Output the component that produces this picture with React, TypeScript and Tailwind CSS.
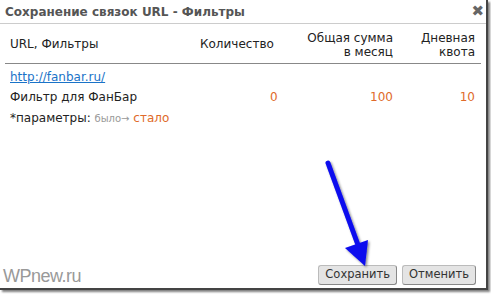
export default function App() {
  return (
    <div className="relative w-[491px] h-[294px] bg-white overflow-hidden" style={{ fontFamily: '"DejaVu Sans", Verdana, sans-serif' }}>
      <div className="w-[488px] h-[290px] bg-white border-r-[2px] border-b-[2px] border-[#444] shadow-[2px_2px_2px_rgba(0,0,0,0.5)] flex flex-col">
        {/* Title */}
        <div className="flex items-center justify-between h-[24px] pl-[5px] pr-[2px] border-b border-[#ccc]">
          <span className="text-[12px] font-bold text-[#555]">Сохранение связок URL - Фильтры</span>
          <span className="text-[15px] font-bold text-[#666] leading-none">✖</span>
        </div>

        {/* Table */}
        <div className="px-[5px] pt-[7px] text-[12px] text-[#222]">
          <div className="grid grid-cols-[188px_88px_112px_82px] items-end pb-[4px] border-b border-[#888]">
            <span className="pl-[5px] pb-[6px]">URL, Фильтры</span>
            <span className="pb-[6px] pl-[7px]">Количество</span>
            <span className="text-right leading-[14px]">Общая сумма<br />в месяц</span>
            <span className="text-right leading-[14px]">Дневная<br />квота</span>
          </div>
          <div className="pl-[5px] pt-[3px] leading-[20px]">
            <a className="text-[#1a73c8] underline">http://fanbar.ru/</a>
          </div>
          <div className="grid grid-cols-[188px_88px_112px_82px] leading-[20px]">
            <span className="pl-[5px]">Фильтр для ФанБар</span>
            <span className="pl-[77px] text-[#e06a2a]">0</span>
            <span className="text-right text-[#e06a2a]">100</span>
            <span className="text-right text-[#e06a2a]">10</span>
          </div>
          <div className="pl-[5px] leading-[22px]">
            *параметры: <span className="text-[10px] text-[#999]">было→</span><span className="text-[#e06a2a]"> стало</span>
          </div>
        </div>

        {/* Footer */}
        <div className="mt-auto flex items-end justify-between pl-[3px] pr-[10px] pb-[3px]">
          <span className="text-[18px] text-[#999] tracking-[-0.5px] leading-[20px] mb-[-1px]" style={{ fontFamily: '"Liberation Sans", Arial, sans-serif' }}>WPnew.ru</span>
          <div className="flex gap-[5px] text-[11.5px] text-[#333]">
            <button className="h-[20px] px-[6px] rounded-[3px] bg-[#e4e4e4] border border-[#bbb] border-r-[#888] border-b-[#888]">Сохранить</button>
            <button className="h-[20px] px-[6px] rounded-[3px] bg-[#e4e4e4] border border-[#bbb] border-r-[#888] border-b-[#888]">Отменить</button>
          </div>
        </div>
      </div>

      {/* Arrow overlay */}
      <svg className="absolute left-0 top-0" width="491" height="294" viewBox="0 0 491 294">
        <defs>
          <filter id="sh" x="-20%" y="-20%" width="140%" height="140%">
            <feDropShadow dx="1.5" dy="1.5" stdDeviation="1.2" floodColor="#000" floodOpacity="0.45" />
          </filter>
        </defs>
        <g filter="url(#sh)">
          <line x1="328" y1="163" x2="358" y2="245" stroke="#0a0aee" strokeWidth="5" strokeLinecap="round" />
          <polygon points="345,248 368,240 365,266" fill="#0a0aee" />
        </g>
      </svg>
    </div>
  );
}
